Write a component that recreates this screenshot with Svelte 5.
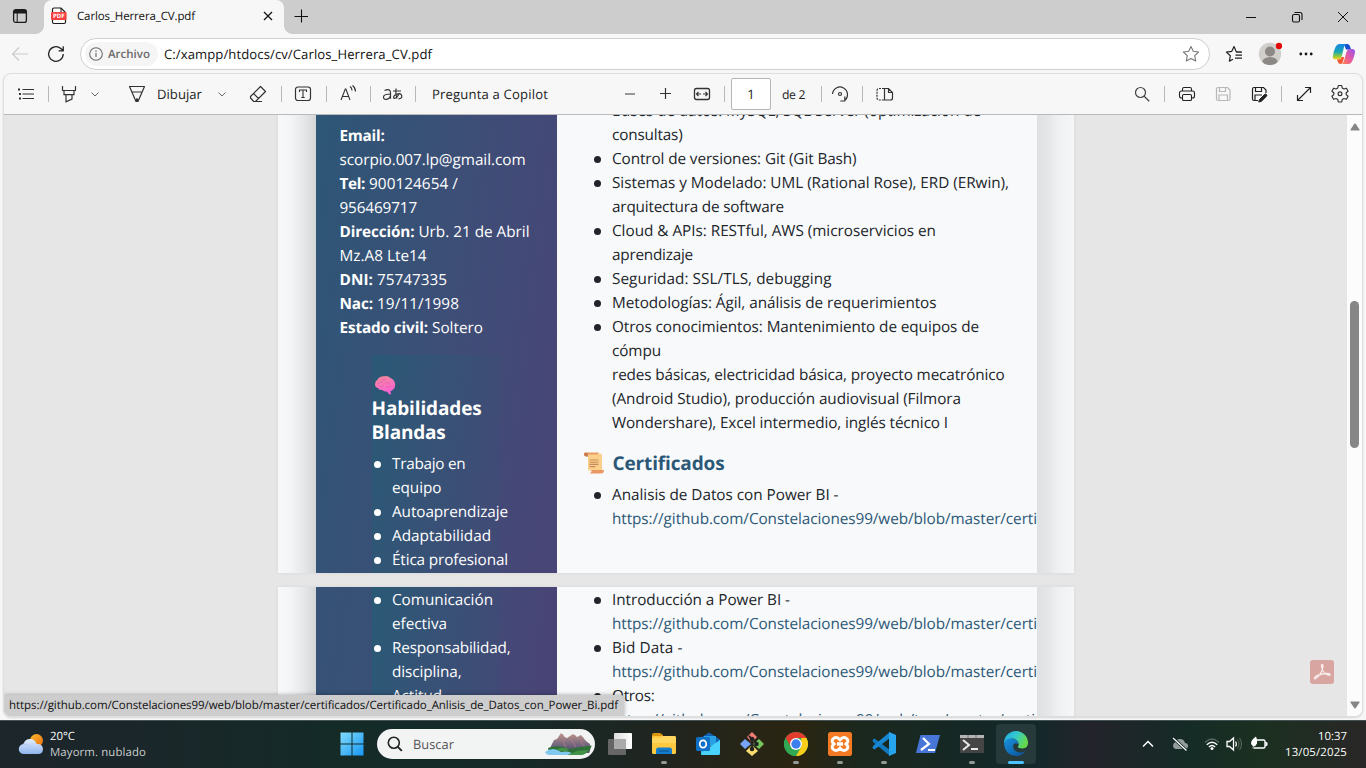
<script>
  // Each text line carries the advance width it should occupy; tracking absorbs the difference.
  function fit(node, width) {
    const natural = node.getBoundingClientRect().width;
    const count = [...node.textContent].length;
    node.style.letterSpacing = `${(width - natural) / count}px`;
  }

  const contact = [
    { b: 'Email:', t: '', bw: 45 },
    { b: '', t: 'scorpio.007.lp@gmail.com', w: 186 },
    { b: 'Tel:', t: ' 900124654 /', bw: 25.5, w: 93 },
    { b: '', t: '956469717', w: 77.5 },
    { b: 'Dirección:', t: ' Urb. 21 de Abril', bw: 75, w: 115 },
    { b: '', t: 'Mz.A8 Lte14', w: 87 },
    { b: 'DNI:', t: ' 75747335', bw: 33.5, w: 74 },
    { b: 'Nac:', t: ' 19/11/1998', bw: 33.5, w: 86 },
    { b: 'Estado civil:', t: ' Soltero', bw: 88.5, w: 55 }
  ];
  const link = { t: 'https://github.com/Constelaciones99/web/blob/master/certi', w: 425, a: true };
  const skills = [
    { t: 'Bases de datos: MySQL, SQL Server (optimización de', w: 369, d: true },
    { t: 'consultas)', w: 70.5 },
    { t: 'Control de versiones: Git (Git Bash)', w: 244.5, d: true },
    { t: 'Sistemas y Modelado: UML (Rational Rose), ERD (ERwin),', w: 397, d: true },
    { t: 'arquitectura de software', w: 172 },
    { t: 'Cloud & APIs: RESTful, AWS (microservicios en', w: 324, d: true },
    { t: 'aprendizaje', w: 81 },
    { t: 'Seguridad: SSL/TLS, debugging', w: 219.5, d: true },
    { t: 'Metodologías: Ágil, análisis de requerimientos', w: 324.5, d: true },
    { t: 'Otros conocimientos: Mantenimiento de equipos de', w: 367, d: true },
    { t: 'cómpu', w: 49 },
    { t: 'redes básicas, electricidad básica, proyecto mecatrónico', w: 392.5 },
    { t: '(Android Studio), producción audiovisual (Filmora', w: 349 },
    { t: 'Wondershare), Excel intermedio, inglés técnico I', w: 336 }
  ];
  const certs1 = [{ t: 'Analisis de Datos con Power BI -', w: 226.5, d: true }, link];
  const certs2 = [
    { t: 'Introducción a Power BI -', w: 178, d: true }, link,
    { t: 'Bid Data -', w: 70.5, d: true }, link,
    { t: 'Otros:', w: 42.5, d: true },
    { t: 'https://github.com/Constelaciones99/web/tree/master/certi', w: 423, a: true }
  ];
  const soft1 = [
    { t: 'Trabajo en', w: 73.5, d: true }, { t: 'equipo', w: 49.5 },
    { t: 'Autoaprendizaje', w: 116, d: true },
    { t: 'Adaptabilidad', w: 99, d: true },
    { t: 'Ética profesional', w: 116, d: true }
  ];
  const soft2 = [
    { t: 'Comunicación', w: 101, d: true }, { t: 'efectiva', w: 55 },
    { t: 'Responsabilidad,', w: 118.5, d: true }, { t: 'disciplina,', w: 69.5 },
    { t: 'Actitud', w: 50 }
  ];
</script>

{#snippet list(items)}
  {#each items as l}
    <div class="line" class:dot={l.d} class:link={l.a}><span use:fit={l.w}>{l.t}</span></div>
  {/each}
{/snippet}

<div class="screen">
  <header class="tabs">
    <svg class="ws" width="16" height="16" viewBox="0 0 16 16"><rect x="1.6" y="1.6" width="12.8" height="12.8" rx="2.2" fill="none" stroke="#1b1b1b" stroke-width="1.3"/><path d="M2 2h12v3.5H2z" fill="#1b1b1b"/><path d="M5.2 5v9" stroke="#1b1b1b" stroke-width="1"/></svg>
    <div class="tab">
      <svg width="16" height="18" viewBox="0 0 16 18"><path d="M1.5 5V2.5a1.5 1.5 0 0 1 1.500-1.500H10l4.500 4.500V15a1.500 1.500 0 0 1-1.500 1.500H3A1.500 1.500 0 0 1 1.500 15V13" fill="#fff" stroke="#1a1a1a" stroke-width="1.2"/><path d="M10 1v4.500h4.500" fill="none" stroke="#1a1a1a"/><rect x="0" y="5" width="15.500" height="8" rx="1" fill="#f8403f"/><text x="2" y="11.200" font-size="6" font-weight="700" fill="#fff" font-family="Open Sans, sans-serif" textLength="11.500">PDF</text></svg>
      <span class="title" use:fit={118}>Carlos_Herrera_CV.pdf</span>
      <svg class="x" width="10" height="10" viewBox="0 0 10 10"><path d="M1 1l8 8M9 1L1 9" stroke="#151515" stroke-width="1.3"/></svg>
    </div>
    <svg class="new" width="14" height="14" viewBox="0 0 14 14"><path d="M7.500 .500v13M.500 7.500h13.500" stroke="#111" stroke-width="1.100"/></svg>
    <div class="wincontrols">
      <svg width="12" height="12" viewBox="0 0 12 12"><path d="M1 6.500h10" stroke="#111"/></svg>
      <svg width="12" height="12" viewBox="0 0 12 12"><rect x="1.500" y="3.500" width="7" height="7.500" rx="1.500" fill="none" stroke="#111" stroke-width="1.100"/><path d="M3.500 1.500H9a2 2 0 0 1 2 2V9" fill="none" stroke="#111" stroke-width="1.100"/></svg>
      <svg width="12" height="12" viewBox="0 0 12 12"><path d="M1 1l10 10M11 1L1 11" stroke="#111"/></svg>
    </div>
  </header>

  <div class="address">
    <svg class="back" width="18" height="16" viewBox="0 0 18 16"><path d="M8 1.500L1.500 8 8 14.500M1.500 8H17" fill="none" stroke="#cbcbcb" stroke-width="1.200"/></svg>
    <svg class="reload" width="18" height="18" viewBox="0 0 18 18"><path d="M16.200 9a7.300 7.300 0 1 1-2.400-5.400L16 5.600M16.200 1.200v4.600h-4.600" fill="none" stroke="#222" stroke-width="1.300"/></svg>
    <div class="field">
      <div class="chip">
        <svg width="14" height="14" viewBox="0 0 14 14"><circle cx="7" cy="7" r="6.300" fill="none" stroke="#6d6d6d" stroke-width="1.100"/><path d="M7 6v4M7 3.600v1.300" stroke="#6d6d6d" stroke-width="1.200"/></svg>
        <span use:fit={42}>Archivo</span>
      </div>
      <span class="url" use:fit={268}>C:/xampp/htdocs/cv/Carlos_Herrera_CV.pdf</span>
      <svg class="star" width="18" height="18" viewBox="0 0 18 18"><path d="M9 1.400l2.300 4.900 5.300.7-3.900 3.700 1 5.300L9 13.400l-4.700 2.600 1-5.300L1.400 7l5.300-.7z" fill="none" stroke="#777" stroke-width="1.100" stroke-linejoin="round"/></svg>
    </div>
    <div class="acts">
      <svg width="18" height="18" viewBox="0 0 18 18"><path d="M16 6.800h-4.700L9 1.600 6.800 6.300l-5.400.8 3.900 3.700-.900 5.300L8 14.200M11 7.200h6M10.500 10.200h6.500M10 13.200h7" fill="none" stroke="#222" stroke-width="1.200" stroke-linejoin="round"/></svg>
      <svg width="24" height="24" viewBox="0 0 24 24"><defs><clipPath id="av"><circle cx="12" cy="12" r="11"/></clipPath></defs><circle cx="12" cy="12" r="11.200" fill="#d1cfcc"/><g clip-path="url(#av)" fill="#8b8885"><circle cx="12" cy="9.500" r="5"/><ellipse cx="12" cy="20.500" rx="7.800" ry="5.500"/></g><circle cx="21" cy="4" r="3.200" fill="#e30b0b"/></svg>
      <svg width="14" height="4" viewBox="0 0 14 4"><g fill="#1a1a1a"><circle cx="1.800" cy="2" r="1.400"/><circle cx="7" cy="2" r="1.400"/><circle cx="12.200" cy="2" r="1.400"/></g></svg>
      <svg width="24" height="22" viewBox="0 0 24 22"><defs><linearGradient id="c1" x1="0" y1="0" x2="0" y2="1"><stop offset="0" stop-color="#1486e4"/><stop offset=".5" stop-color="#19a7b5"/><stop offset=".8" stop-color="#93ca38"/><stop offset="1" stop-color="#ffd329"/></linearGradient><linearGradient id="c2" x1="1" y1="0" x2="0" y2="1"><stop offset="0" stop-color="#9155f2"/><stop offset=".5" stop-color="#e658a4"/><stop offset="1" stop-color="#ff863d"/></linearGradient></defs><path d="M12 1h3.500q2 0 2.800 3l.7 2.500h-5z" fill="#164fd0"/><path d="M7.500 1H15q-2 0-3 3L9.500 14q-.8 2.500-3 2.500H3.500q-3 0-2.700-3Q1.500 8 3.500 4 5 1 7.500 1z" fill="url(#c1)"/><path d="M17.500 6H20q3.500 0 3 3.500-.800 4.500-2.500 8Q19 21 16.500 21H9q2 0 2.800-2.500L14.500 9q.8-3 3-3z" fill="url(#c2)"/><path d="M5 16.500h1.500q2.500 0 3.200-2.500h2.500l-1.200 4.500Q10 21 8.500 21q-2 0-2.600-2z" fill="#f25b38"/></svg>
    </div>
  </div>

  <section class="viewer">
    <nav class="tools">
      <svg width="24" height="24" viewBox="0 0 24 24"><path d="M8.500 7.500H20M8.500 12H20M8.500 16.500H20" stroke="#333" stroke-width="1.200"/><path d="M4 7.500h2M7 12H5M7 16.500H5" stroke="#333" stroke-width="1.800"/></svg>
      <i></i>
      <svg width="24" height="24" viewBox="0 0 24 24"><path d="M5.500 4v4.500h13V4M7 8.500v4.200h10V8.500M9 13v6.800l6-2.800v-4" fill="none" stroke="#333" stroke-width="1.200"/></svg>
      <svg width="12" height="24" viewBox="0 0 12 24"><path d="M2.500 10.500L6 14l3.500-3.500" fill="none" stroke="#666"/></svg>
      <svg width="24" height="24" viewBox="0 0 24 24"><path d="M4.500 4.500h15L13 19.500h-2zM6.800 10h10.400M11 19.500l1-3 1 3" fill="none" stroke="#333" stroke-width="1.200" stroke-linejoin="round"/></svg>
      <span use:fit={45}>Dibujar</span>
      <svg width="12" height="24" viewBox="0 0 12 24"><path d="M2.500 10.500L6 14l3.500-3.500" fill="none" stroke="#666"/></svg>
      <svg width="24" height="24" viewBox="0 0 24 24"><path d="M14.500 4.500l5 5L9.500 19.500H7.800L4.500 16v-1.500zM7.500 11.500l5 5M10 19.500h6" fill="none" stroke="#333" stroke-width="1.200" stroke-linejoin="round"/></svg>
      <i></i>
      <svg width="24" height="24" viewBox="0 0 24 24"><rect x="4.500" y="5" width="15" height="13.500" rx="2.500" fill="none" stroke="#333" stroke-width="1.200"/><path d="M8.500 10V8h7v2M12 8v7.500M10.300 15.500h3.400" fill="none" stroke="#333" stroke-width="1.100"/></svg>
      <i></i>
      <svg width="24" height="24" viewBox="0 0 24 24"><path d="M5 18L9.300 7h.600L14 18M6.500 14.500h6M14 4.500q2 1.300 2 4M16.500 3.500q3 2.200 3 6" fill="none" stroke="#333" stroke-width="1.100"/></svg>
      <i></i>
      <svg width="24" height="24" viewBox="0 0 24 24"><path d="M3.500 8.500q6-2.500 6 2.300v6M9.500 12q-7 0-7 3t3.300 2.300Q8.500 16.700 9.500 14M12 9h8M15 6.500q-.8 6 1 10M18.500 11q-3 6-5.500 5.300-1.500-2 2.500-4t5.200 1.200q.8 3-3.200 3.300" fill="none" stroke="#333" stroke-width="1.200"/></svg>
      <i></i>
      <span use:fit={116}>Pregunta a Copilot</span>
      <svg width="24" height="24" viewBox="0 0 24 24"><path d="M7 12h10" stroke="#777" stroke-width="1.500"/></svg>
      <svg width="24" height="24" viewBox="0 0 24 24"><path d="M7 11.500h11M12.500 6v11" stroke="#333" stroke-width="1.200"/></svg>
      <svg width="24" height="24" viewBox="0 0 24 24"><rect x="4.500" y="6.500" width="15" height="11" rx="2" fill="none" stroke="#333" stroke-width="1.300"/><path d="M6.500 12H11M13 12h4.500M8.500 9.800L6.500 12l2 2.200M15.500 9.800l2 2.200-2 2.200" fill="none" stroke="#333" stroke-width="1.200"/></svg>
      <i></i>
      <div class="pageno">1</div>
      <span class="of" use:fit={23}>de 2</span>
      <i></i>
      <svg width="24" height="24" viewBox="0 0 24 24"><path d="M4.500 12a7.500 7.500 0 1 1 12 6.500M16.800 14.500v4.500h-4.500" fill="none" stroke="#333" stroke-width="1.200"/><circle cx="12" cy="12" r="1.500" fill="none" stroke="#333" stroke-width="1.200"/></svg>
      <i></i>
      <svg width="24" height="24" viewBox="0 0 24 24"><path d="M11 6.500H6a2 2 0 0 0-2 2V16a2 2 0 0 0 2 2h5" fill="none" stroke="#333" stroke-width="1.200" stroke-dasharray="2 1"/><path d="M11.500 6.500h4l4 4V16a2 2 0 0 1-2 2h-6zM15.500 6.500v4h4" fill="none" stroke="#333" stroke-width="1.200"/></svg>
      <svg width="24" height="24" viewBox="0 0 24 24"><circle cx="10.500" cy="10.500" r="5" fill="none" stroke="#444" stroke-width="1.200"/><path d="M14.200 14.200l5 5" stroke="#444" stroke-width="1.300"/></svg>
      <i></i>
      <svg width="24" height="24" viewBox="0 0 24 24"><path d="M7.500 16H6.500a2 2 0 0 1-2-2v-3a2 2 0 0 1 2-2h11a2 2 0 0 1 2 2v3a2 2 0 0 1-2 2h-1M7.500 9V7a1.500 1.500 0 0 1 1.500-1.500h6a1.500 1.500 0 0 1 1.500 1.500V9" fill="none" stroke="#222" stroke-width="1.100"/><rect x="7.500" y="12.500" width="9" height="6" rx="1.300" fill="none" stroke="#222" stroke-width="1.100"/></svg>
      <svg width="24" height="24" viewBox="0 0 24 24"><path d="M5.500 7a1.500 1.500 0 0 1 1.500-1.500h9.500l2.500 2.500v9a1.500 1.500 0 0 1-1.500 1.500H7A1.500 1.500 0 0 1 5.500 17zM8.500 5.500v4h6v-4M8 18.500v-5.500h8.500v5.500" fill="none" stroke="#b8b8b8" stroke-width="1.200"/></svg>
      <svg width="24" height="24" viewBox="0 0 24 24"><path d="M11 18.500H7A1.500 1.500 0 0 1 5.500 17V7a1.500 1.500 0 0 1 1.500-1.500h9.500L19 8v3M8.500 5.500v4h6v-4M8 18.500v-5.500h7" fill="none" stroke="#222" stroke-width="1.200"/><path d="M12.500 17.500l5-5q1.500-1 2 0 .8 1-.2 1.900l-5 5-2.600.6z" fill="#222" stroke="#222"/></svg>
      <i></i>
      <svg width="24" height="24" viewBox="0 0 24 24"><path d="M5.500 18.500l13-13M13 5.500h5.500V11M5.500 13v5.500H11" fill="none" stroke="#222" stroke-width="1.200"/></svg>
      <svg width="24" height="24" viewBox="0 0 24 24"><path d="M10.300 3.500h3.400l.500 2.500 1.800 1 2.400-.8 1.700 3-1.900 1.600v1.800l1.900 1.700-1.700 3-2.400-.8-1.800 1-.5 2.500h-3.400l-.5-2.500-1.800-1-2.400.8-1.700-3 1.900-1.700v-1.800L3.900 9.200l1.700-3 2.400.8 1.800-1z" fill="none" stroke="#333" stroke-width="1.200" stroke-linejoin="round"/><circle cx="12" cy="11.700" r="1.900" fill="none" stroke="#333" stroke-width="1.200"/></svg>
    </nav>

    <div class="body">
      <div class="canvas">
        <div class="page first">
          <div class="shade l"></div>
          <aside>
            <div class="contact">
              {#each contact as c}
                <div class="line">{#if c.b}<b use:fit={c.bw}>{c.b}</b>{/if}{#if c.t}<span use:fit={c.w}>{c.t}</span>{/if}</div>
              {/each}
            </div>
            <div class="inner top">
              <svg class="brain" width="22" height="20" viewBox="0 0 22 20"><defs><linearGradient id="br" x1="0" y1="0" x2=".3" y2="1"><stop offset="0" stop-color="#ef8b98"/><stop offset="1" stop-color="#ff62d5"/></linearGradient></defs><path d="M1 9Q1 6 3.500 4.500 6 1 10 1.300q4-.8 6.500 1.700 4 1.500 4.500 5.500.8 4-2.500 6.500-1 1-2 1l.5 3.500q-3-.5-4-3-3 .5-4.500-1.500-3 .5-4-1.500Q.8 12.500 1 9z" fill="url(#br)"/><path d="M4 9q2-3 5-2M8 4q2 2 4 0M11 8q3-2 5 1M6 12q3 0 4-2M12 12q3 1 5-1" fill="none" stroke="#dc5aa8" stroke-width=".7"/></svg>
              <h2><span use:fit={110}>Habilidades</span><br /><span use:fit={74}>Blandas</span></h2>
              <div class="list">{@render list(soft1)}</div>
            </div>
          </aside>
          <main>
            <div class="list">{@render list(skills)}</div>
            <h3>
              <svg width="22" height="22" viewBox="0 0 22 22"><path d="M3 1.500h14q2 0 2 2.500v14H5V4z" fill="#f8cb88"/><path d="M1 2q0-1.500 2-1.500h13q-2 1-1.500 4H4Q1 4.500 1 2z" fill="#e79b5f"/><path d="M1 2Q1 .5 3 .5T5 4.500H4Q1 4.500 1 2z" fill="#c97a4f"/><path d="M5 2.500h13v16H5z" fill="#fbd08c"/><path d="M8 20q1-1 .5-2H21q0 3.500-3 3.500H6.500Q8 21 8 20z" fill="#eb9865"/><path d="M6.500 8h9M6.500 10.200h9M6.500 12.400h9M6.500 14.600h6" stroke="#c98b59" stroke-width="1.100"/></svg>
              <span use:fit={112}>Certificados</span>
            </h3>
            <div class="list">{@render list(certs1)}</div>
          </main>
          <div class="shade r"></div>
        </div>
        <div class="page second">
          <div class="shade l"></div>
          <aside>
            <div class="inner"><div class="list">{@render list(soft2)}</div></div>
          </aside>
          <main><div class="list">{@render list(certs2)}</div></main>
          <div class="shade r"></div>
        </div>
      </div>
      <div class="scroll">
        <svg width="10" height="8" viewBox="0 0 10 8"><path d="M1 7.500Q0 7.500.500 6.500L4 1.200q1-1.200 2 0l3.500 5.300q.5 1-.5 1z" fill="#868686"/></svg>
        <div class="thumb"></div>
        <svg width="10" height="8" viewBox="0 0 10 8"><path d="M1 .500Q0 .500.500 1.500L4 6.800q1 1.200 2 0l3.500-5.300q.5-1-.5-1z" fill="#868686"/></svg>
      </div>
      <svg class="acrobat" width="24" height="24" viewBox="0 0 24 24"><rect width="24" height="24" rx="3" fill="#d9a5a1"/><path d="M11.500 5q1.700-1.500 1.500 1.500Q12.300 13 6.500 18q-2.500 1.700-2-.3Q7 14.300 17 13.500q4.500.3 2.500 1.800-3.500 0-6.500-4.300-2-4-1.500-6z" fill="none" stroke="#f8ecea" stroke-width="1.300"/></svg>
      <div class="status"><span use:fit={609}>https://github.com/Constelaciones99/web/blob/master/certificados/Certificado_Anlisis_de_Datos_con_Power_Bi.pdf</span></div>
    </div>
  </section>

  <footer>
    <svg class="weather" width="26" height="24" viewBox="0 0 26 24"><defs><linearGradient id="sun" x1="0" y1="0" x2="1" y2="1"><stop stop-color="#fbb92d"/><stop offset="1" stop-color="#e97012"/></linearGradient><linearGradient id="cl" x1="0" y1="0" x2="0" y2="1"><stop stop-color="#e4eefc"/><stop offset="1" stop-color="#8fb4ee"/></linearGradient></defs><circle cx="18.500" cy="7.500" r="6.500" fill="url(#sun)"/><path d="M6 21a5 5 0 0 1-.5-10Q7 6 12 6q5 0 6.500 5 6-.5 6.500 5 0 5-5 5z" fill="url(#cl)"/><path d="M5 11q4-.5 6 2.500" stroke="#a9c5f3" fill="none"/></svg>
    <div class="wtext"><span use:fit={25}>20°C</span><em use:fit={96}>Mayorm. nublado</em></div>
    <svg class="start" width="24" height="24" viewBox="0 0 24 24"><defs><linearGradient id="win" gradientUnits="userSpaceOnUse" x1="0" y1="0" x2="24" y2="24"><stop stop-color="#83dcfc"/><stop offset="1" stop-color="#1596f5"/></linearGradient></defs><path d="M.500.500h11v11h-11zM12.500.500h11v11h-11zM.500 12.500h11v11h-11zM12.500 12.500h11v11h-11z" fill="url(#win)"/></svg>
    <div class="search">
      <svg width="16" height="16" viewBox="0 0 16 16"><circle cx="6.800" cy="6.800" r="5.500" fill="none" stroke="#222" stroke-width="1.600"/><path d="M10.800 10.800l4 4" stroke="#222" stroke-width="1.900"/></svg>
      <span use:fit={41}>Buscar</span>
      <svg class="mount" width="48" height="24" viewBox="0 0 48 24"><defs><linearGradient id="mt" x1="0" y1="0" x2="0" y2="1"><stop stop-color="#c39788"/><stop offset=".6" stop-color="#716580"/><stop offset="1" stop-color="#514964"/></linearGradient></defs><path d="M4 18L9 8l3-1 4-6 3 4 3 1 6-4 4 3 4-2 5 6 4 3q1 6-1 9z" fill="url(#mt)"/><path d="M17 2l3 4-2 4 3 5M30 3l-3 6 4 6M38 5l-2 5 4 5" fill="none" stroke="#a97b83"/><path d="M3 16q10-4 21 1l18-3q5 0 5-1-3 9-11 10H10q-7-2-7-7z" fill="#2d7138"/><path d="M0 20q8-6 16 0 9-2 13 3H5q-4 0-5-3z" fill="#81c8ee"/><path d="M12 17q9-3 12 1-8 3-12-1M22 23l10-4 12-1q-5 5-8 5z" fill="#429348"/></svg>
    </div>
    <div class="apps">
      <div class="app"><svg width="26" height="26" viewBox="0 0 26 26"><defs><linearGradient id="tv"><stop stop-color="#ddd"/><stop offset="1" stop-color="#fff"/></linearGradient></defs><rect x="7" y="2" width="18" height="16" rx="1" fill="url(#tv)"/><rect x="1" y="8" width="18" height="16" rx="1" fill="#666"/><path d="M7 8h12v10H7z" fill="#aaa"/></svg></div>
      <div class="app run"><svg width="26" height="26" viewBox="0 0 26 26"><path d="M1 4q0-2 2-2h6l3 2v5H1z" fill="#db9610"/><rect x="1" y="5" width="24" height="18" rx="1.500" fill="#fdca3f"/><path d="M1 7h8l3-2h11q2 0 2 2v5H1z" fill="#ffd75e"/><path d="M5 23v-4q0-2.500 2.500-2.500h11q2.500 0 2.500 2.500v4z" fill="#157dcb"/><path d="M8 20h10" stroke="#0a5d9f" stroke-width="1.300"/></svg></div>
      <div class="app"><svg width="26" height="26" viewBox="0 0 26 26"><path d="M4 8l10-6.500 11 7V12H4z" fill="#1263b4"/><path d="M9 5h12v10H9z" fill="#299fe4"/><path d="M25 9v13q0 2-2 2H6V14l9 4z" fill="#2bbcf2"/><path d="M25 9l-19 13q0 2 2 2h15q2 0 2-2z" fill="#49d2fb"/><rect x="1" y="6" width="14" height="14" rx="1.500" fill="#0f70c6"/><ellipse cx="8" cy="13" rx="3.200" ry="3.600" fill="none" stroke="#fff" stroke-width="1.800"/></svg></div>
      <div class="app"><svg width="26" height="26" viewBox="0 0 26 26"><path d="M13 1l5 5-5 6-5-6z" fill="#f37b78"/><path d="M20 8l5 5-5 5-6-5z" fill="#75c65d"/><path d="M6 8l6 5-6 5-5-5z" fill="#77a4f8"/><path d="M13 14l6 6-6 5-6-5z" fill="#fbdc72"/><path d="M10 5l3 3v10M13 8q4 1 4 5" stroke="#222" stroke-width="1.800" fill="none"/><g fill="#222"><circle cx="13" cy="8" r="2.300"/><circle cx="17.500" cy="13" r="2.300"/><circle cx="13" cy="18" r="2.300"/></g></svg></div>
      <div class="app run"><svg width="26" height="26" viewBox="0 0 26 26"><circle cx="13" cy="13" r="12" fill="#31a853"/><path d="M2.600 7A12 12 0 0 1 23.400 7H13L8 16z" fill="#e33b2e"/><path d="M23.400 7A12 12 0 0 1 13 25l5.200-9V7z" fill="#fdcd1a"/><path d="M2.600 7L7.800 16 13 19v6A12 12 0 0 1 2.600 7z" fill="#31a853"/><circle cx="13" cy="13" r="6" fill="#fff"/><circle cx="13" cy="13" r="4.700" fill="#3d7fee"/></svg></div>
      <div class="app run"><svg width="26" height="26" viewBox="0 0 26 26"><rect x="1" y="1" width="24" height="24" rx="2.500" fill="#f47b24"/><path d="M7 13Q4.500 11 5.500 8.500 7.500 5.500 11 7l2 2 2-2q3.500-1.500 5.500 1.500 1 2.500-1.500 4.500 2.500 2 1.500 4.500-2 3-5.500 1.500l-2-2-2 2q-3.500 1.500-5.500-1.500Q4.500 15 7 13z" fill="none" stroke="#fff" stroke-width="2.900"/><path d="M10 13h6" stroke="#fff" stroke-width="3.500"/></svg></div>
      <div class="app run"><svg width="26" height="26" viewBox="0 0 26 26"><path d="M1.500 9L3.500 7.500 19 19v6L2 11z" fill="#1178be"/><path d="M1.500 17l2 1.500L19 7V1L2 15z" fill="#1687d2"/><path d="M18 1l7 3v18l-7 3z" fill="#28a5ef"/></svg></div>
      <div class="app"><svg width="26" height="26" viewBox="0 0 26 26"><path d="M5.500 4H25l-5 18H1z" fill="#4775d8"/><path d="M8 7l6 6-8 6M13 19h7" fill="none" stroke="#fff" stroke-width="2.200"/></svg></div>
      <div class="app run"><svg width="26" height="26" viewBox="0 0 26 26"><rect x="1" y="4" width="24" height="18" rx="1" fill="#454545"/><path d="M1 4h24v3H1z" fill="#b5b5b5"/><path d="M9 4v3M17 4v3" stroke="#777"/><path d="M4 9l6 5-6 5M12 18h7" fill="none" stroke="#e8e8e8" stroke-width="2"/></svg></div>
      <div class="app active"><svg width="26" height="26" viewBox="0 0 26 26"><defs><linearGradient id="e1" x1="0" y1="0" x2="1" y2=".4"><stop stop-color="#20a6dd"/><stop offset=".5" stop-color="#32c9d2"/><stop offset="1" stop-color="#65d94b"/></linearGradient><linearGradient id="e2" x1="0" y1="0" x2="1" y2="1"><stop stop-color="#1893df"/><stop offset="1" stop-color="#0c4f99"/></linearGradient></defs><path d="M1 12A12 12 0 0 1 25 12q0 5-5.500 5.500-5 0-4.500-2 1.500-1.500 0-4.500-3-5-8.500-3Q3 9 1 12z" fill="url(#e1)"/><path d="M1 13Q2 7.500 8 7.500q6.500.2 7.500 5.500-5-2-5.500 2 0 5 6 6.500 4 .5 6.500-1.500Q19 25 13 25 2 24 1 13z" fill="url(#e2)"/></svg></div>
    </div>
    <div class="tray">
      <svg width="12" height="16" viewBox="0 0 12 16"><path d="M1 10.500l5-5 5 5" fill="none" stroke="#fff" stroke-width="1.500"/></svg>
      <svg width="18" height="16" viewBox="0 0 18 16"><path d="M4.500 13a3.500 3.500 0 0 1-.5-6.500Q5 3 9 3t5 4q3 0 3 3t-3 3z" fill="#929c99"/><path d="M2 2l13 12" stroke="#142823" stroke-width="3"/><path d="M2 2l13.500 12.500" stroke="#fff" stroke-width="1.200"/></svg>
      <svg width="16" height="16" viewBox="0 0 16 16"><path d="M1 6.500q7-7 14 0" fill="none" stroke="#596864" stroke-width="1.300"/><path d="M2.800 8.800q5.200-5 10.400 0M4.900 11q3.100-3 6.200 0" fill="none" stroke="#fff" stroke-width="1.400"/><circle cx="8" cy="12.500" r="1.500" fill="#fff"/></svg>
      <svg width="16" height="16" viewBox="0 0 16 16"><path d="M1 5.500h2.500L7.500 2v12L3.500 10.500H1z" fill="none" stroke="#fff" stroke-width="1.300"/><path d="M9.500 5.500q1.800 2.500 0 5" fill="none" stroke="#fff" stroke-width="1.200"/><path d="M11.500 3.500q3 4.500 0 9M13.500 2q4 6 0 12" fill="none" stroke="#56655a" stroke-width="1.100"/></svg>
      <svg width="18" height="16" viewBox="0 0 18 16"><path d="M7 4h6.500q1.500 0 1.500 1.500v5q0 1.500-1.500 1.500H3.500M15.500 6.500q1.500 0 1.500 1.500t-1.500 1.500" fill="none" stroke="#fff" stroke-width="1.400"/><path d="M1 7q0-3 5-6.500 2 4 1 7-1 2.500-3.500 3L2 13l1-3Q1 9 1 7z" fill="#fff"/></svg>
    </div>
    <div class="clock"><span use:fit={29}>10:37</span><span use:fit={62}>13/05/2025</span></div>
  </footer>
</div>

<style>
  :global(body) { margin: 0; overflow: hidden; }
  .screen { width: 1366px; height: 768px; overflow: hidden; display: flex; flex-direction: column; background: #f7f7f7; font-family: "Open Sans", "Noto Sans", sans-serif; color: #212529; text-rendering: geometricPrecision; }
  svg { display: block; flex: none; }
  span, b, em { display: inline-block; white-space: pre; }
  .tabs { height: 34px; flex: none; display: flex; background: #cdcdcd; align-items: center; }
  .ws { margin: 0 16px 2px 12px; }
  .tab { width: 240px; height: 34px; background: #f7f7f7; border-radius: 8px 8px 0 0; display: flex; align-items: center; box-sizing: border-box; padding: 0 11px 2px 7px; position: relative; }
  .tab::before, .tab::after { content: ""; position: absolute; bottom: 0; width: 8px; height: 8px; }
  .tab::before { left: -8px; background: radial-gradient(circle at 0 0, #cdcdcd 7.5px, #f7f7f7 8px); }
  .tab::after { right: -8px; background: radial-gradient(circle at 100% 0, #cdcdcd 7.5px, #f7f7f7 8px); }
  .title { font-size: 11.5px; margin-left: 10px; color: #111; }
  .x { margin-left: auto; }
  .new { margin: 0 0 3px 10px; }
  .wincontrols { margin-left: auto; display: flex; gap: 34px; padding-right: 17px; }
  .address { height: 40px; flex: none; display: flex; align-items: center; }
  .back { margin-left: 11px; }
  .reload { margin-left: 18px; }
  .field { width: 1130px; height: 32px; margin-left: 15px; box-sizing: border-box; border: 1px solid #cfcfcf; border-radius: 16px; background: #fff; display: flex; align-items: center; padding: 0 9px 0 4px; }
  .chip { width: 73px; height: 24px; box-sizing: border-box; border-radius: 12px; background: #f5f5f5; display: flex; align-items: center; gap: 5px; padding-left: 4px; font-size: 11.5px; font-weight: 600; color: #6b6b6b; }
  .url { font-size: 13.1px; color: #111; margin-left: 6px; }
  .star { margin-left: auto; }
  .acts { display: grid; grid-template-columns: 48px 24px 48px 28px; justify-items: center; align-items: center; }
  .viewer { flex: none; height: 644px; width: 1360px; margin-left: 3px; box-sizing: border-box; margin-top: -1px; border: 1px solid #dedede; border-radius: 8px; overflow: hidden; box-shadow: 0 1px 2px #0002; background: #f7f7f7; display: flex; flex-direction: column; }
  .tools { height: 41px; flex: none; box-sizing: border-box; border-bottom: 1px solid #b9b9b9; display: grid; grid-template-columns: 34px 11px 32px 20px 48px 53px 26px 42px 12px 33px 12px 33px 11px 34px 11px 132px 94px 35px 37px 11px 46px 34px 17px 30px 11px 34px 257px 11px 34px 36px 36px 11px 34px 36px; justify-items: end; align-items: center; font-size: 13.100px; color: #222; }
  .tools i { width: 1px; height: 16px; background: #b8b8b8; }
  .tools .of { font-size: 12.2px; }
  .pageno { width: 40px; height: 32px; box-sizing: border-box; border: 1px solid #b5b5b5; border-radius: 2px; background: #fff; text-align: center; line-height: 30px; }
  .body { flex: 1; min-height: 0; display: flex; position: relative; background: #e6e6e6; }
  .canvas { width: 1343px; flex: none; overflow: hidden; padding-left: 274px; box-sizing: border-box; }
  .page { width: 796px; display: flex; background: #f8f9fb; overflow: hidden; box-shadow: 0 0 4px #0001; }
  .first { height: 458px; }
  .second { height: 140px; margin-top: 14px; }
  .shade { width: 38px; flex: none; }
  .l { background: linear-gradient(90deg, #f8f9fb, #f3f4f6 35%, #e4e5e7 72%, #d4d5d7); }
  .r { width: 37px; background: linear-gradient(90deg, #dfe0e2, #e4e6e8 30%, #eff0f2 55%, #f5f6f8); }
  aside { width: 241px; flex: none; color: #fff; background: linear-gradient(98deg, #2e5676 3%, #3c4f77 48%, #474676 92%); overflow: hidden; }
  .second aside { background: linear-gradient(98deg, #365276 3%, #3c4f77 45%, #484576 90%); }
  .second .list { padding-top: 1px; }
  .line { height: 24px; line-height: 24px; font-size: 15.300px; white-space: nowrap; position: relative; }
  .contact { padding: 9px 0 0 23.5px; }
  .inner { margin-left: 56px; width: 128px; height: 180px; background: linear-gradient(98deg, #2a5976, #375276 45%, #434976); }
  .inner.top { margin-top: 15px; padding-top: 20px; height: 250px; }
  .brain { margin-left: 2px; }
  h2, h3 { margin: 0; font-size: 19px; font-weight: 700; line-height: 24px; }
  h2 { margin-top: 1px; margin-left: -.5px; }
  .inner .list { padding-left: 20px; }
  .inner h2 + .list { margin-top: 8px; }
  .dot::before { content: ""; position: absolute; left: -18.5px; top: 8.5px; width: 7px; height: 7px; border-radius: 50%; background: currentColor; }
  main { width: 480px; box-sizing: border-box; overflow: hidden; }
  main .list { padding-left: 55px; }
  .first main > .list:first-child { margin-top: -16px; }
  .link, h3 { color: #2b5876; }
  h3 { display: flex; align-items: center; gap: 8px; padding-left: 25.5px; margin-top: 16px; height: 24px; margin-bottom: 8px; }
  .scroll { width: 15px; background: #fcfcfc; display: flex; flex-direction: column; align-items: center; padding: 8px 0 7px; box-sizing: border-box; justify-content: space-between; }
  .scroll .thumb { width: 9px; height: 147px; border-radius: 4.5px; background: #868686; margin-top: -83px; }
  .acrobat { position: absolute; left: 1306px; top: 545px; }
  .status { position: absolute; left: 0; bottom: 0; width: 620px; height: 21px; background: #cdcdcd; font-size: 11.500px; line-height: 21px; color: #111; padding-left: 5px; box-sizing: border-box; border-top-right-radius: 3px; box-shadow: 0 0 4px #0005; }
  footer { height: 48px; margin-top: auto; flex: none; display: flex; align-items: center; color: #fff; border-top: 1px solid #435153; box-sizing: border-box; background: linear-gradient(90deg, #1c262b 0, #1b262a 120px, #142b28 340px, #152a29 500px, #202520 660px, #2b2511 800px, #1b281e 860px, #12282a 1030px, #23242b 1090px, #152b26 1190px, #1b3020 1260px, #292727 1366px); font-size: 11.400px; }
  .weather { margin-left: 18px; }
  .wtext { width: 96px; margin-left: 6px; display: flex; flex-direction: column; align-items: flex-start; line-height: 16px; }
  .wtext em { font-style: normal; color: #c8cccb; }
  .start { margin: 0 0 1px 194px; }
  .search { width: 218px; height: 30px; border-radius: 15px; background: #f2f3f3; margin: 0 0 1px 13px; display: flex; align-items: center; box-sizing: border-box; padding: 0 2px 0 10px; color: #555; font-size: 12.800px; }
  .search span { margin-left: 10px; }
  .mount { margin-left: auto; }
  .apps { display: flex; margin: 0 0 1px 5px; gap: 4px; }
  .app { width: 40px; height: 40px; display: flex; align-items: center; justify-content: center; position: relative; box-sizing: border-box; }
  .run::after, .active::after { content: ""; position: absolute; bottom: 0; left: 17px; width: 6px; height: 3px; border-radius: 2px; background: #939995; }
  .active { background: #263a3c; border-radius: 4px; }
  .active::after { left: 12px; width: 16px; background: #4cc2ff; bottom: 0; }
  .tray { margin: 0 0 1px 106px; display: grid; grid-template-columns: 12px 35px 31px 22px 26px; justify-items: end; }
  .clock { margin-left: auto; margin-right: 19px; display: flex; flex-direction: column; align-items: flex-end; line-height: 16px; }
</style>
